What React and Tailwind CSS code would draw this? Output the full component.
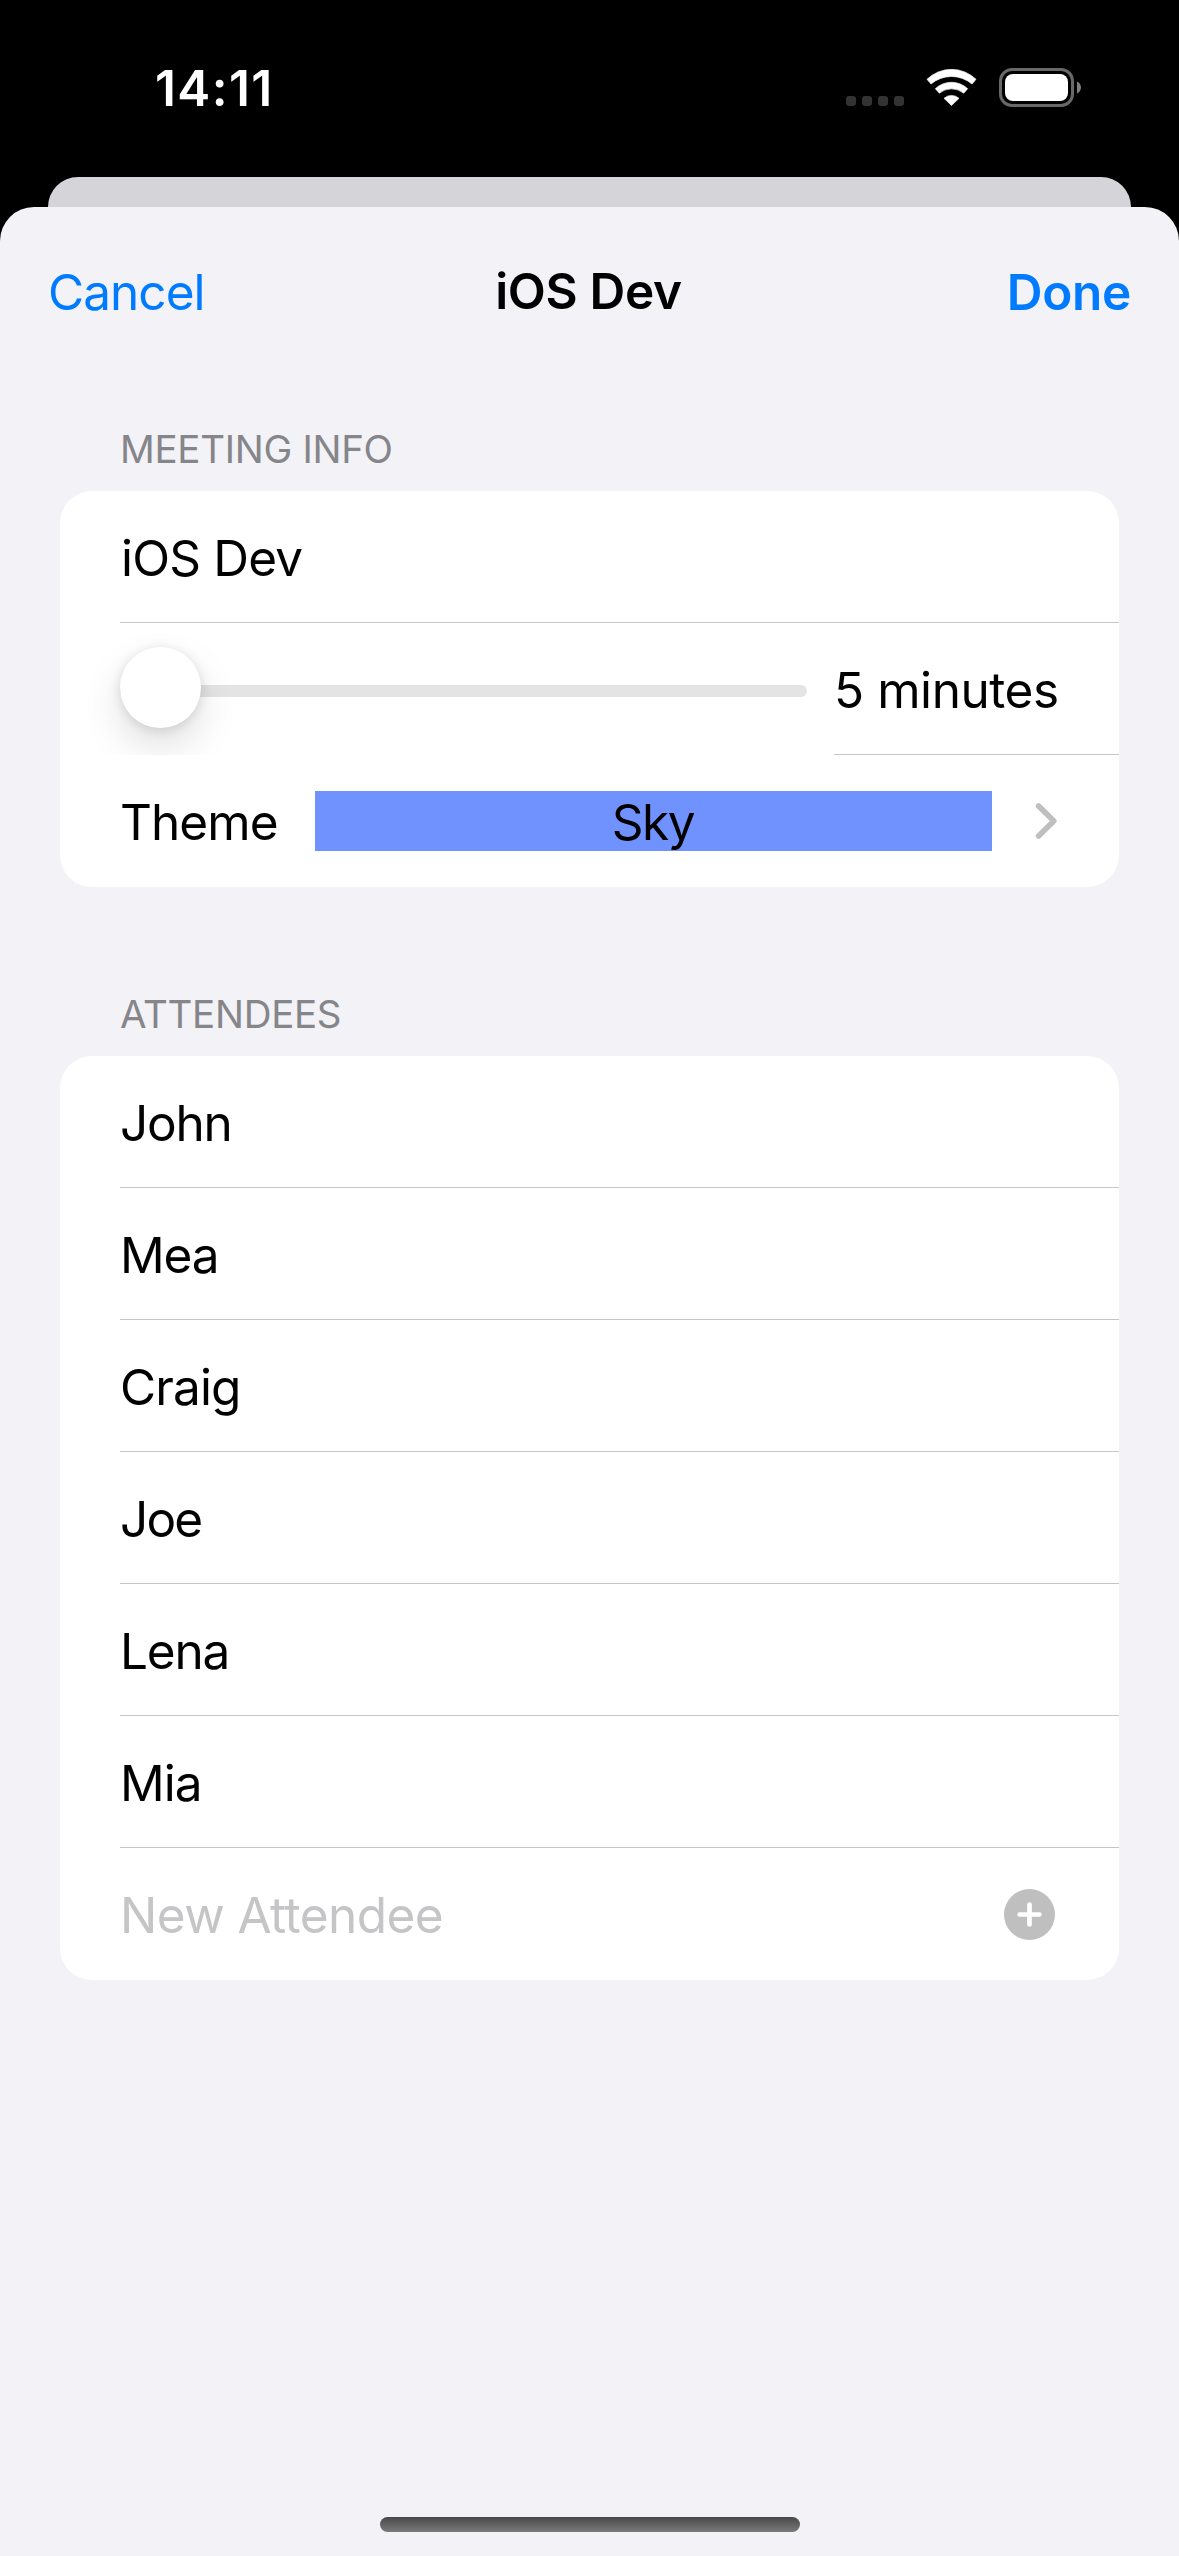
const ATTENDEES = [
  { name: "John", tracking: "tracking-[-1.2px]" },
  { name: "Mea", tracking: "tracking-[-1.2px]" },
  { name: "Craig", tracking: "tracking-[-0.89px]" },
  { name: "Joe", tracking: "tracking-[-1.8px]" },
  { name: "Lena", tracking: "tracking-[-1.2px]" },
  { name: "Mia", tracking: "tracking-[-1px]" },
];

function WifiIcon() {
  return (
    <svg
      className="h-[37px] w-[51px]"
      viewBox="289 27 151 111"
      fill="#fff"
      stroke="#fff"
      strokeWidth="2"
      strokeLinejoin="round"
    >
      <path d="M291 58 A105 105 0 0 1 438 58 L426 72 A95 95 0 0 0 303 72 Z" />
      <path d="M316 86 A71 71 0 0 1 413 86 L401 99.500 A58 58 0 0 0 328 99.500 Z" />
      <path d="M342 115 A33 33 0 0 1 387 115 L364.500 136.500 Z" />
    </svg>
  );
}

function Battery() {
  return (
    <div className="flex items-center gap-[3px]">
      <div className="h-[39px] w-[75px] rounded-[13px] border-[3px] border-[#686868] p-[3px]">
        <div className="size-full rounded-[8px] bg-white" />
      </div>
      <svg className="h-[13px] w-[4px]" viewBox="0 0 4 13" fill="#7f7f7f">
        <path d="M0 0.500 C2.500 1.500 4 4 4 6.500 S2.500 11.500 0 12.500 Z" />
      </svg>
    </div>
  );
}

function StatusBar() {
  return (
    <div className="flex h-[176px] shrink-0 items-center justify-between pl-[155px] pr-[98px] text-white">
      <span className="font-semibold tracking-[1.42px]">14:11</span>
      <div className="-mt-px flex items-center">
        <div className="mr-[22px] flex gap-[6px] pt-[27px]">
          <span className="size-[10px] rounded-[3px] bg-[#333]" />
          <span className="size-[10px] rounded-[3px] bg-[#333]" />
          <span className="size-[10px] rounded-[3px] bg-[#333]" />
          <span className="size-[10px] rounded-[3px] bg-[#333]" />
        </div>
        <div className="mr-[22px]">
          <WifiIcon />
        </div>
        <Battery />
      </div>
    </div>
  );
}

function Section({ title, tracking, children }) {
  return (
    <section className="mx-[60px]">
      <h2
        className={`mb-[19px] pl-[60px] text-[38.500px] leading-[46px] text-[#85858a] ${tracking}`}
      >
        {title}
      </h2>
      <div className="overflow-hidden rounded-[32px] bg-white">{children}</div>
    </section>
  );
}

function Row({ children, divider = true, className = "" }) {
  return (
    <div className="h-[132px] overflow-hidden pl-[60px]">
      <div
        className={`flex h-full items-center border-b pt-[2px] ${
          divider ? "border-[#c6c6c8]" : "border-transparent"
        } ${className}`}
      >
        {children}
      </div>
    </div>
  );
}

function LengthSlider() {
  return (
    <div className="relative mr-[27px] h-[12px] flex-1 rounded-full bg-[#e4e4e5]">
      <div className="absolute -top-[38px] left-0 size-[81px] rounded-full bg-white shadow-[0_18px_39px_rgba(0,0,0,0.13),0_2px_12px_rgba(0,0,0,0.12)]" />
    </div>
  );
}

export default function App() {
  return (
    <div className="flex h-[2556px] w-[1179px] flex-col overflow-hidden bg-black font-['Inter',sans-serif] text-[49.500px] leading-[60px] whitespace-nowrap text-black">
      <StatusBar />
      <div className="mx-[48px] mt-px h-[30px] shrink-0 rounded-t-[30px] bg-[#d5d4d9]" />

      <main className="flex flex-1 flex-col rounded-t-[34px] bg-[#f2f2f7]">
        <header className="grid h-[168px] grid-cols-3 items-center pl-[48px] pr-[48px]">
          <button className="pt-[2px] text-left tracking-[-0.95px] text-[#007aff]">Cancel</button>
          <h1 className="pr-[2px] text-center font-semibold tracking-[-0.3px]">iOS Dev</h1>
          <button className="pt-[2px] text-right font-semibold tracking-[-0.29px] text-[#007aff]">
            Done
          </button>
        </header>

        <div className="flex flex-col gap-[104px] pt-[51px]">
          <Section title="MEETING INFO" tracking="tracking-[-0.3px]">
            <Row>
              <span className="pl-px tracking-[-0.8px]">iOS Dev</span>
            </Row>
            <div className="flex h-[132px] items-center overflow-hidden pl-[60px] pt-[4px]">
              <LengthSlider />
              <div className="-mt-[4px] flex h-[132px] w-[285px] items-center border-b border-[#c6c6c8] pt-[2px] tracking-[-0.43px]">
                5 minutes
              </div>
            </div>
            <Row divider={false} className="pr-[60px]">
              <span className="w-[195px] tracking-[-0.94px]">Theme</span>
              <span className="-mt-px h-[60px] w-[677px] bg-[#6f92ff] pt-px pr-[1px] text-center tracking-[-1.4px]">
                Sky
              </span>
              <svg
                className="-mt-px ml-auto h-[38px] w-[24px]"
                viewBox="0 0 24 38"
                fill="none"
                stroke="#bfbfbf"
                strokeWidth="5.600"
                strokeLinecap="round"
                strokeLinejoin="round"
              >
                <path d="M3.600 4 L18.800 19 L3.600 34" />
              </svg>
            </Row>
          </Section>

          <Section title="ATTENDEES" tracking="tracking-[-0.3px]">
            {ATTENDEES.map(({ name, tracking }) => (
              <Row key={name}>
                <span className={tracking}>{name}</span>
              </Row>
            ))}
            <Row divider={false} className="justify-between pr-[64px]">
              <span className="tracking-[-0.56px] text-[#c5c5c7]">New Attendee</span>
              <svg className="size-[51px]" viewBox="0 0 51 51">
                <circle cx="25.500" cy="25.500" r="25.500" fill="#bfbfbf" />
                <path
                  d="M25.500 15.600 V35.400 M15.600 25.500 H35.400"
                  stroke="#fff"
                  strokeWidth="4.700"
                  strokeLinecap="round"
                />
              </svg>
            </Row>
          </Section>
        </div>

        <div className="mx-auto mt-auto mb-[24px] h-[15px] w-[420px] rounded-full bg-linear-to-b from-[#484848] to-[#7b7b7c]" />
      </main>
    </div>
  );
}
